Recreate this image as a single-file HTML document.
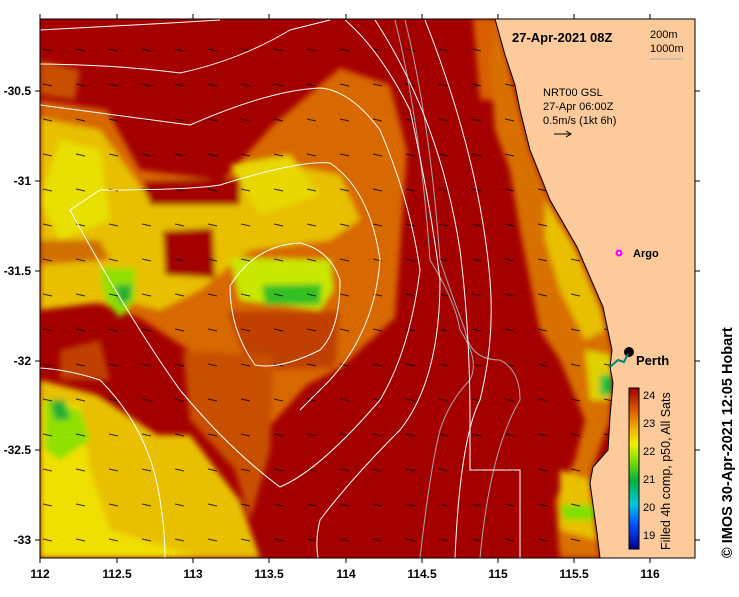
<!DOCTYPE html>
<html><head><meta charset="utf-8"><style>
html,body{margin:0;padding:0;background:#fff;}
body{width:739px;height:592px;overflow:hidden;font-family:"Liberation Sans",sans-serif;}
</style></head><body>
<svg width="739" height="592" viewBox="0 0 739 592" xmlns="http://www.w3.org/2000/svg" font-family="Liberation Sans, sans-serif">
<defs>
<filter id="b" x="-20%" y="-20%" width="140%" height="140%"><feGaussianBlur stdDeviation="3"/></filter>
<pattern id="arr" width="33" height="35" patternUnits="userSpaceOnUse">
<path d="M10 14 l9 2" stroke="#000" stroke-width="1.1"/>
</pattern>
<linearGradient id="cb" x1="0" y1="1" x2="0" y2="0">
<stop offset="0" stop-color="#00008a"/><stop offset="0.15" stop-color="#0050ff"/><stop offset="0.28" stop-color="#00c8e0"/>
<stop offset="0.42" stop-color="#00b040"/><stop offset="0.55" stop-color="#80e000"/><stop offset="0.65" stop-color="#f0f000"/>
<stop offset="0.75" stop-color="#f0b000"/><stop offset="0.85" stop-color="#e06000"/><stop offset="1" stop-color="#a00000"/>
</linearGradient>
<clipPath id="pc"><rect x="40" y="19" width="655" height="539"/></clipPath>
</defs>
<g clip-path="url(#pc)">
<rect x="40" y="19" width="655" height="539" fill="#a40000"/>
<g filter="url(#b)">
<path d="M40 100 L107 110 L140 170 L223 180 L273 125 L340 68 L390 85 L407 151 L395 318 L340 368 L307 385 L257 440 L240 401 L190 351 L140 318 L90 301 L40 290Z" fill="#d86800"/>
<path d="M40 60 L80 70 L75 100 L40 95Z" fill="#c85000"/>
<path d="M40 118 L100 130 L150 200 L230 190 L290 165 L340 175 L360 220 L330 240 L250 250 L200 290 L160 310 L120 300 L40 310Z" fill="#e8c000"/>
<path d="M60 140 L100 150 L110 220 L60 240 L40 200Z" fill="#e8e000"/>
<path d="M230 165 L290 155 L320 195 L260 215Z" fill="#e8d800"/>
<path d="M143 181 L240 178 L240 205 L150 205Z" fill="#a40000"/>
<path d="M163 231 L213 228 L215 278 L165 275Z" fill="#a40000"/>
<path d="M40 240 L100 240 L110 260 L40 265Z" fill="#d07000"/>
<path d="M230 258 L330 260 L333 290 L320 310 L240 300Z" fill="#c8e800"/>
<path d="M262 285 L322 284 L320 305 L265 305Z" fill="#30c020"/>
<path d="M100 268 L135 268 L135 300 L120 318 L105 300Z" fill="#90e000"/>
<path d="M115 285 L132 285 L130 300 L120 305Z" fill="#20b030"/>
<path d="M227 311 L340 311 L335 368 L250 370Z" fill="#c04000"/>
<path d="M40 380 L97 395 L157 435 L190 435 L240 501 L260 558 L40 558Z" fill="#e8c000"/>
<path d="M40 400 L80 405 L90 470 L110 530 L200 558 L40 558Z" fill="#f0e000"/>
<path d="M45 400 L80 410 L90 440 L60 460 L45 450Z" fill="#90e000"/>
<path d="M50 400 L65 400 L70 420 L55 420Z" fill="#20b030"/>
<path d="M183 351 L273 355 L270 451 L250 520 L235 470 L190 420Z" fill="#c85000"/>
<path d="M60 350 L100 340 L110 380 L60 380Z" fill="#c04000"/>
<path d="M473 18 L500 18 L505 100 L480 100Z" fill="#d86000"/>
<path d="M497 19 L520 110 L530 150 L550 200 L577 247 L603 307 L612 350 L610 420 L593 467 L590 483 L597 533 L600 558 L560 558 L555 500 L575 460 L585 420 L560 360 L540 330 L530 280 L520 230 L510 170 L495 130 L490 60Z" fill="#d87000"/>
<path d="M545 200 L575 250 L600 310 L605 330 L585 340 L560 290 L545 240Z" fill="#e8c000"/>
<path d="M585 350 L612 355 L612 400 L590 400Z" fill="#e0d000"/>
<path d="M600 375 L612 375 L612 395 L600 395Z" fill="#20c040"/>
<path d="M560 470 L590 480 L597 540 L560 530Z" fill="#e8c000"/>
<path d="M560 505 L595 505 L595 520 L565 520Z" fill="#80e000"/>
</g>
<rect x="40" y="19" width="655" height="539" fill="url(#arr)" opacity="0.8"/>
<g fill="none" stroke="#aaa" stroke-width="1">
<path d="M395 20 Q420 120 430 260 Q455 300 460 330 Q480 360 470 380 Q450 400 440 430 Q430 470 420 558"/>
<path d="M405 20 Q430 120 440 260 Q450 290 465 330 Q470 360 500 360 Q520 370 520 400 Q490 450 480 558"/>
</g>
<g fill="none" stroke="#fff" stroke-width="1">
<path d="M40 30 L170 23 L220 20"/>
<path d="M40 64 Q120 65 180 73 Q240 60 290 30 L330 20"/>
<path d="M40 105 Q150 120 190 125 Q270 90 320 88 Q350 90 380 130 Q410 200 420 270 Q410 350 380 400 Q320 470 280 487 Q230 450 180 390 Q130 320 70 210 L100 190 Q190 190 220 185 Q300 160 330 163 Q370 190 380 260 Q375 330 330 380 L300 410"/>
<path d="M230 286 Q255 245 300 243 Q330 250 340 280 Q340 330 320 350 Q280 370 255 365 Q230 330 230 286Z"/>
<path d="M40 368 Q70 370 100 380 Q150 430 160 500 Q165 530 165 558"/>
<path d="M345 20 Q380 50 410 110 Q430 200 440 280 Q440 380 400 430 Q350 480 320 520 Q315 540 318 558"/>
<path d="M375 20 Q440 120 460 250 Q470 330 470 420 L470 470 Q490 470 520 470 L520 558"/>
<path d="M425 20 Q480 160 490 280 Q495 340 480 400 Q460 440 455 558"/>
</g>
<path d="M495 19 L505 55 L515 85 L520 110 L530 150 L550 200 L577 247 L603 307 L612 350 L610 367 L613 383 L610 417 L608 450 L593 467 L590 483 L597 533 L600 558 L695 558 L695 19Z" fill="#fdcb9b" stroke="#000" stroke-width="1"/>
<circle cx="619" cy="253" r="3.5" fill="#ff00ff"/><circle cx="619" cy="253" r="1.2" fill="#fff"/>
<circle cx="629" cy="352" r="5" fill="#000"/>
<path d="M610 367 L618 360 L624 362 L628 354" stroke="#087" stroke-width="2" fill="none"/>
</g>
<rect x="40" y="19" width="655" height="539" fill="none" stroke="#000" stroke-width="1"/>
<text x="512" y="42" font-size="13" font-weight="bold">27-Apr-2021 08Z</text>
<text x="650" y="38" font-size="11">200m</text>
<text x="650" y="52" font-size="11">1000m</text>
<line x1="650" y1="59" x2="683" y2="59" stroke="#aaa"/>
<text x="543" y="96" font-size="11">NRT00 GSL</text>
<text x="543" y="110" font-size="11">27-Apr 06:00Z</text>
<text x="543" y="124" font-size="11">0.5m/s (1kt 6h)</text>
<path d="M554 134 L571 134 M566 131 L571 134 L566 137" stroke="#000" fill="none"/>
<text x="633" y="257" font-size="11" font-weight="bold">Argo</text>
<text x="636" y="365" font-size="13" font-weight="bold">Perth</text>
<rect x="629" y="388" width="10" height="161" fill="url(#cb)" stroke="#000"/>
<g font-size="11">
<text x="643" y="399">24</text><text x="643" y="427">23</text><text x="643" y="455">22</text>
<text x="643" y="483">21</text><text x="643" y="511">20</text><text x="643" y="539">19</text>
</g>
<text transform="translate(670,550) rotate(-90)" font-size="12.5">Filled 4h comp, p50, All Sats</text>
<text transform="translate(732,558) rotate(-90)" font-size="14.5" font-weight="bold">©  IMOS 30-Apr-2021 12:05 Hobart</text>
<g stroke="#000">
<line x1="40" y1="558" x2="40" y2="563"/><line x1="117" y1="558" x2="117" y2="563"/><line x1="193" y1="558" x2="193" y2="563"/>
<line x1="269" y1="558" x2="269" y2="563"/><line x1="346" y1="558" x2="346" y2="563"/><line x1="422" y1="558" x2="422" y2="563"/>
<line x1="498" y1="558" x2="498" y2="563"/><line x1="574" y1="558" x2="574" y2="563"/><line x1="650" y1="558" x2="650" y2="563"/>
<line x1="40" y1="14" x2="40" y2="19"/><line x1="117" y1="14" x2="117" y2="19"/><line x1="193" y1="14" x2="193" y2="19"/>
<line x1="269" y1="14" x2="269" y2="19"/><line x1="346" y1="14" x2="346" y2="19"/><line x1="422" y1="14" x2="422" y2="19"/>
<line x1="498" y1="14" x2="498" y2="19"/><line x1="574" y1="14" x2="574" y2="19"/><line x1="650" y1="14" x2="650" y2="19"/>
<line x1="35" y1="91" x2="40" y2="91"/><line x1="35" y1="181" x2="40" y2="181"/><line x1="35" y1="271" x2="40" y2="271"/>
<line x1="35" y1="361" x2="40" y2="361"/><line x1="35" y1="450" x2="40" y2="450"/><line x1="35" y1="540" x2="40" y2="540"/>
<line x1="695" y1="91" x2="700" y2="91"/><line x1="695" y1="181" x2="700" y2="181"/><line x1="695" y1="271" x2="700" y2="271"/>
<line x1="695" y1="361" x2="700" y2="361"/><line x1="695" y1="450" x2="700" y2="450"/><line x1="695" y1="540" x2="700" y2="540"/>
</g>
<g font-size="12" font-weight="bold" text-anchor="middle">
<text x="40" y="578">112</text><text x="117" y="578">112.5</text><text x="193" y="578">113</text>
<text x="269" y="578">113.5</text><text x="346" y="578">114</text><text x="422" y="578">114.5</text>
<text x="498" y="578">115</text><text x="574" y="578">115.5</text><text x="650" y="578">116</text>
</g>
<g font-size="12" font-weight="bold" text-anchor="end">
<text x="31" y="95">-30.5</text><text x="31" y="185">-31</text><text x="31" y="275">-31.5</text>
<text x="31" y="365">-32</text><text x="31" y="454">-32.5</text><text x="31" y="544">-33</text>
</g>
</svg>
</body></html>
